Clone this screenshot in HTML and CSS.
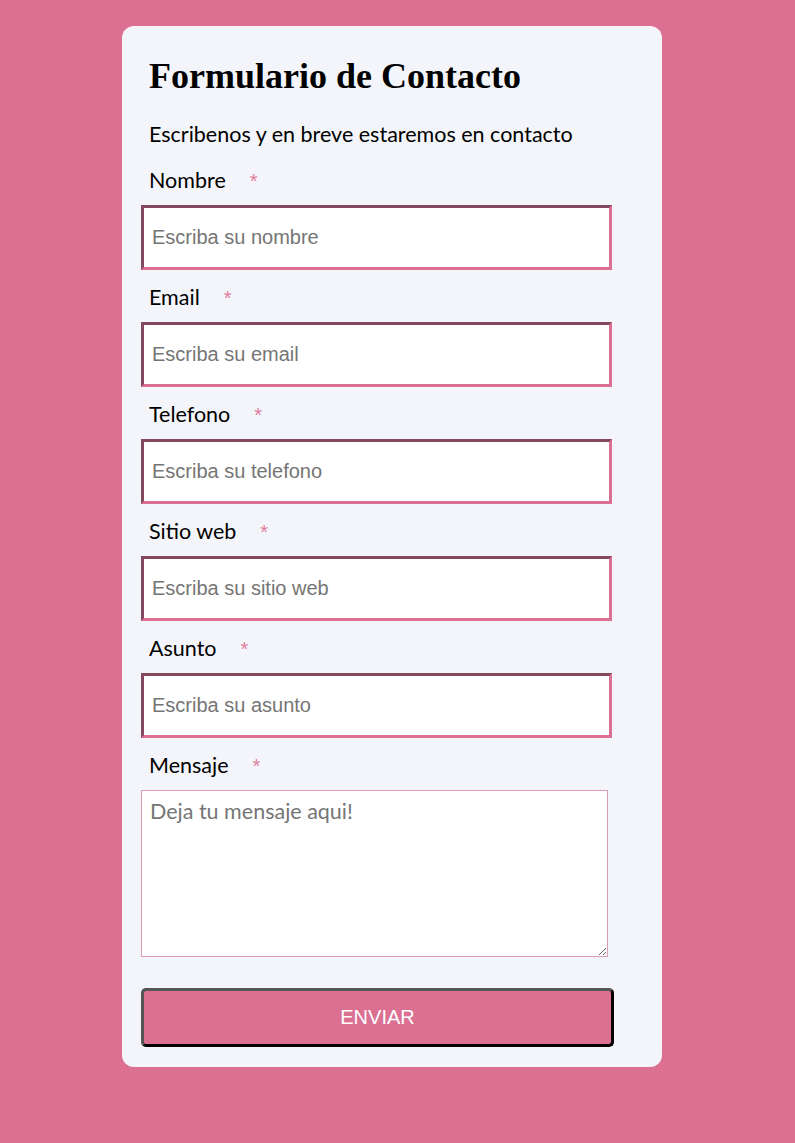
FILE: index.html
```html
<!DOCTYPE html>
<html lang="es">
<head>
<meta charset="utf-8">
<title>Formulario de Contacto</title>
<link rel="stylesheet" href="styles.css">
</head>
<body>
<form class="card">
  <h1 class="title">Formulario de Contacto</h1>
  <p class="subtitle">Escribenos y en breve estaremos en contacto</p>
  <div class="field">
    <label class="label">Nombre<span class="req">*</span></label>
    <input class="input" type="text" placeholder="Escriba su nombre">
  </div>
  <div class="field">
    <label class="label">Email<span class="req">*</span></label>
    <input class="input" type="text" placeholder="Escriba su email">
  </div>
  <div class="field">
    <label class="label">Telefono<span class="req">*</span></label>
    <input class="input" type="text" placeholder="Escriba su telefono">
  </div>
  <div class="field">
    <label class="label">Sitio web<span class="req">*</span></label>
    <input class="input" type="text" placeholder="Escriba su sitio web">
  </div>
  <div class="field">
    <label class="label">Asunto<span class="req">*</span></label>
    <input class="input" type="text" placeholder="Escriba su asunto">
  </div>
  <div class="field">
    <label class="label">Mensaje<span class="req">*</span></label>
    <textarea class="message" placeholder="Deja tu mensaje aqui!"></textarea>
  </div>
  <button class="send" type="button">ENVIAR</button>
</form>
</body>
</html>
```
FILE: styles.css
```css
html, body {
  margin: 0;
  padding: 0;
}
body {
  background: #db7093;
  min-height: 1143px;
}
.card {
  box-sizing: border-box;
  width: 540px;
  margin: 26px 0 0 122px;
  padding: 30px 20px 20px 19px;
  background: #f4f5fa;
  border-radius: 12px;
  display: flex;
  flex-direction: column;
}
.title {
  margin: 0 0 0 8px;
  font-family: "Liberation Serif", serif;
  font-weight: bold;
  font-size: 36px;
  line-height: 40px;
  color: #000;
}
.subtitle {
  margin: 26px 0 0 8px;
  font-family: Lato, "Noto Sans", sans-serif;
  font-size: 21.5px;
  line-height: 24px;
  color: #000;
}
.field {
  display: flex;
  flex-direction: column;
  margin-top: 22px;
}
.field + .field {
  margin-top: 15px;
}
.label {
  display: flex;
  align-items: baseline;
  height: 24px;
  margin: 0 0 13px 8px;
  font-family: Lato, "Noto Sans", sans-serif;
  font-size: 21.5px;
  line-height: 24px;
  color: #000;
}
.req {
  color: #e07d9e;
  font-family: "Liberation Sans", Arial, sans-serif;
  font-size: 20px;
  line-height: 24px;
  margin-left: 24px;
}
.input {
  box-sizing: border-box;
  width: 471px;
  height: 65px;
  margin: 0;
  padding: 0 8px;
  border: 3px solid;
  border-color: #83495f #db7093 #db7093 #83495f;
  background: #fff;
  font-family: "Liberation Sans", Arial, sans-serif;
  font-size: 20px;
  color: #000;
  outline: none;
}
.input::placeholder {
  color: #757575;
}
.message {
  box-sizing: border-box;
  width: 467px;
  height: 167px;
  margin: 0;
  padding: 8px 8px;
  border: 1px solid #d99db6;
  background: #fff;
  font-family: Lato, "Noto Sans", sans-serif;
  font-size: 21.5px;
  line-height: 24px;
  color: #000;
  outline: none;
}
.message::placeholder {
  color: #757575;
}
.send {
  box-sizing: border-box;
  width: 473px;
  height: 59px;
  margin-top: 31px;
  padding: 0;
  border: 3px solid;
  border-color: #555 #000 #000 #555;
  border-radius: 5px;
  background: #db7093;
  color: #fff;
  font-family: "Liberation Sans", Arial, sans-serif;
  font-size: 20px;
  cursor: pointer;
}
```
